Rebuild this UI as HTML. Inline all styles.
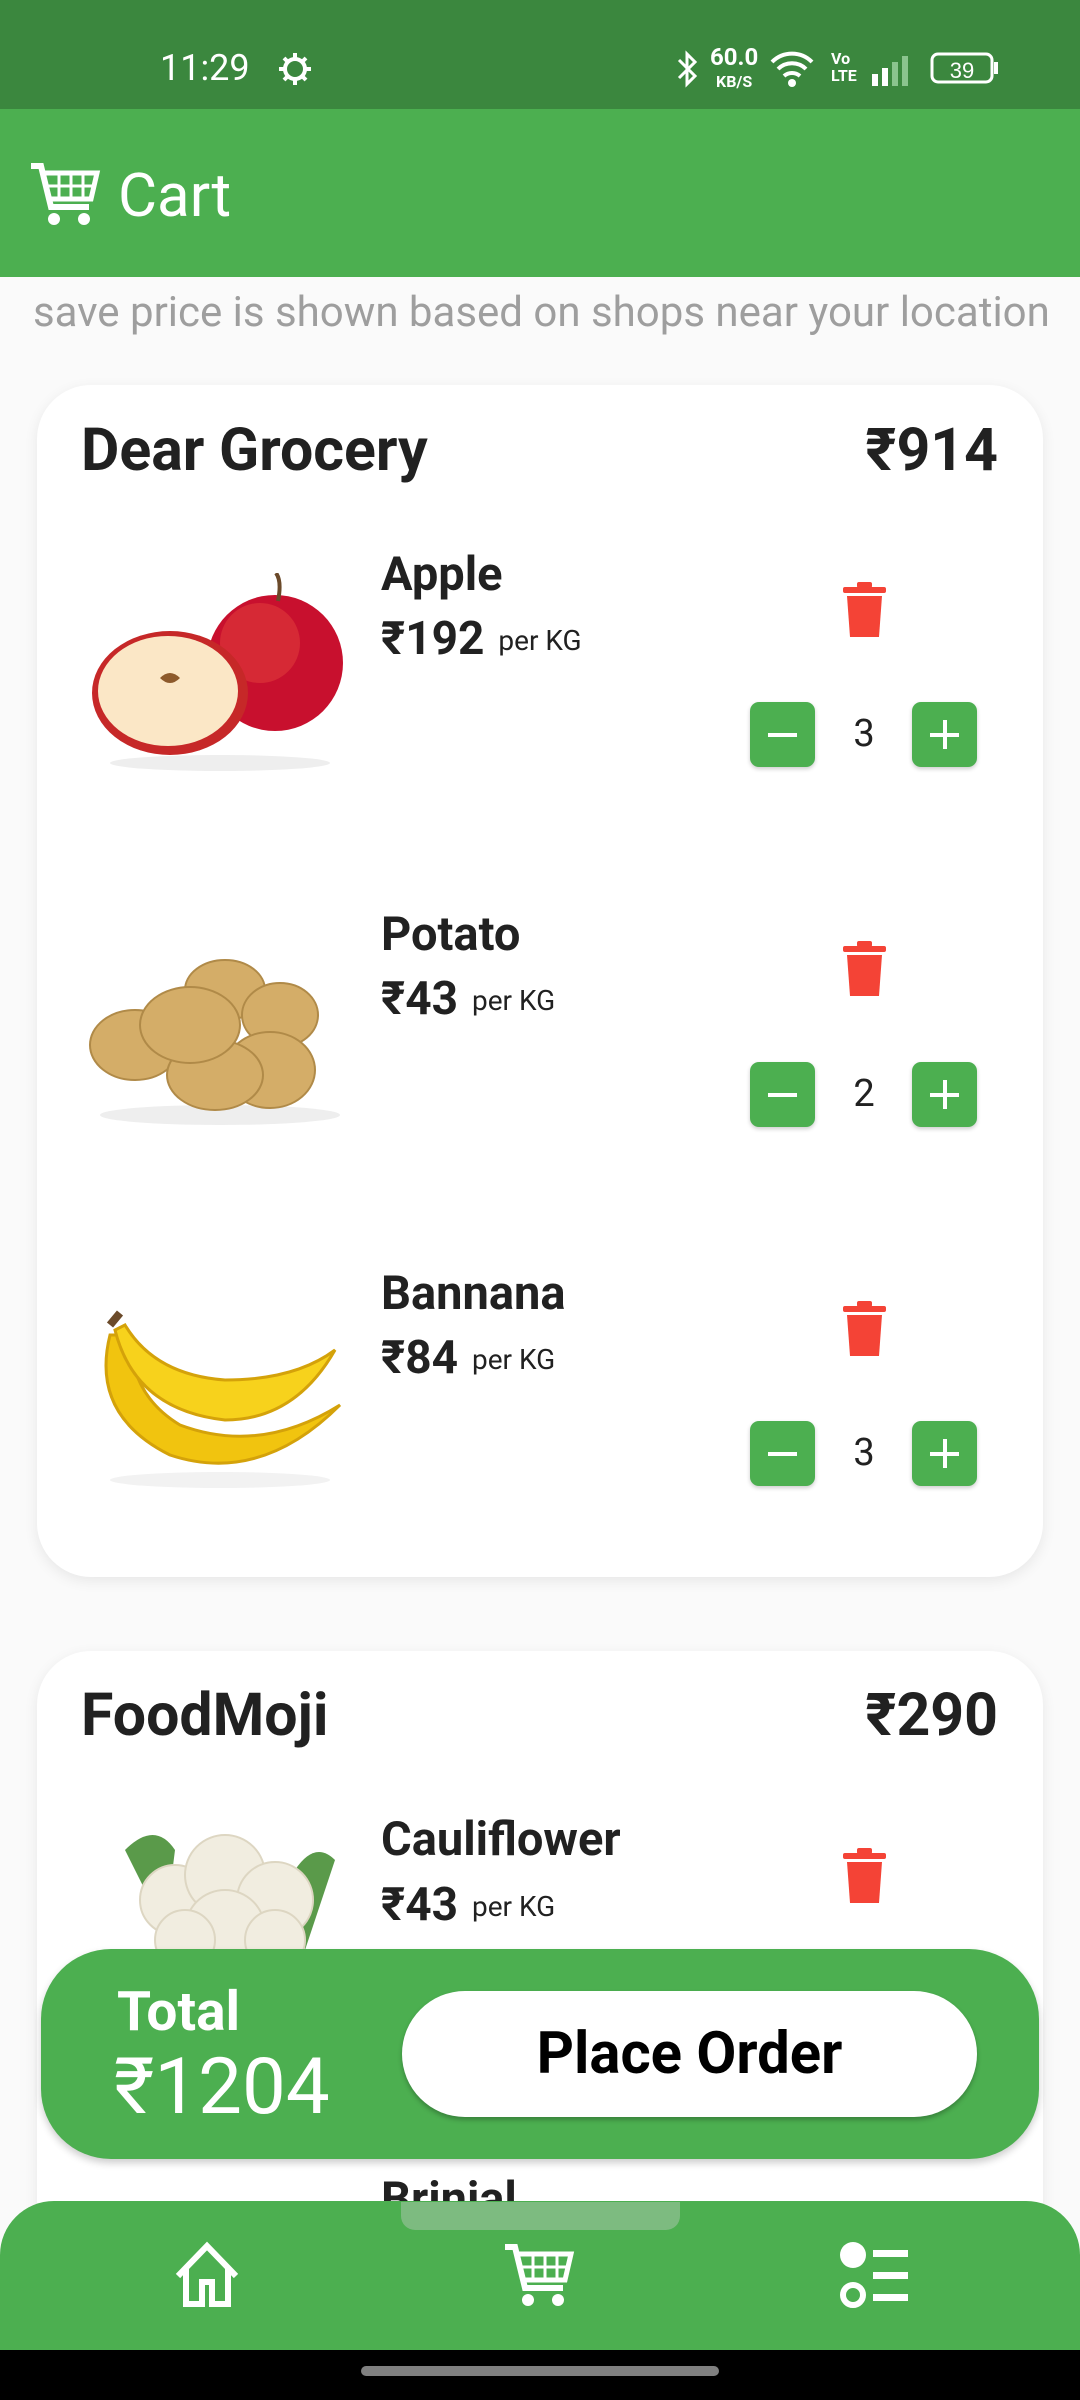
<!DOCTYPE html>
<html><head><meta charset="utf-8"><style>
*{margin:0;padding:0;box-sizing:border-box}
html,body{width:1080px;height:2400px;overflow:hidden}
body{background:#fafafa;font-family:"Roboto","Liberation Sans",sans-serif;position:relative;color:#212121}
.a{position:absolute}
.status{left:0;top:0;width:1080px;height:109px;background:#3b873e;color:#fff}
.appbar{left:0;top:109px;width:1080px;height:168px;background:#4caf50;color:#fff}
.card{background:#fff;border-radius:54px;box-shadow:0 4px 14px rgba(0,0,0,.08)}
.shop{font-weight:bold;font-size:59px;line-height:66px}
.name{font-weight:bold;font-size:47px;line-height:52px;left:381px}
.price{left:381px;font-weight:bold;font-size:46px;line-height:52px}
.price span{font-weight:normal;font-size:28px;margin-left:14px;vertical-align:4px}
.btn{width:65px;height:65px;background:#4caf50;border-radius:9px;box-shadow:0 2px 4px rgba(0,0,0,.2)}
.btn:before{content:"";position:absolute;left:18px;top:31px;width:29px;height:4px;background:#fff}
.plus:after{content:"";position:absolute;left:31px;top:18px;width:4px;height:29px;background:#fff}
.num{width:60px;text-align:center;font-size:38px;line-height:65px;margin-left:-30px}
</style></head><body>
<div class="a status">
 <div class="a" style="left:160px;top:48px;font-size:36px;line-height:40px">11:29</div>
 <svg class="a" style="left:278px;top:52px" width="34" height="34" viewBox="0 0 34 34"><circle cx="17" cy="17" r="10" fill="none" stroke="#fff" stroke-width="4"/><g stroke="#fff" stroke-width="4"><line x1="17" y1="1" x2="17" y2="7"/><line x1="17" y1="27" x2="17" y2="33"/><line x1="1" y1="17" x2="7" y2="17"/><line x1="27" y1="17" x2="33" y2="17"/><line x1="6" y1="6" x2="10" y2="10"/><line x1="24" y1="24" x2="28" y2="28"/><line x1="28" y1="6" x2="24" y2="10"/><line x1="6" y1="28" x2="10" y2="24"/></g></svg>
 <svg class="a" style="left:676px;top:50px" width="24" height="38" viewBox="0 0 24 38"><path d="M3 10 L19 26 L11 34 V4 L19 12 L3 28" fill="none" stroke="#fff" stroke-width="3"/></svg>
 <div class="a" style="left:710px;top:46px;font-size:24px;line-height:22px;font-weight:bold;text-align:center">60.0<br><span style="font-size:16px">KB/S</span></div>
 <svg class="a" style="left:770px;top:50px" width="46" height="38" viewBox="0 0 46 38"><path d="M2 12 A28 28 0 0 1 42 12 M8 19 A20 20 0 0 1 36 19 M14 26 A12 12 0 0 1 30 26" fill="none" stroke="#fff" stroke-width="4"/><circle cx="22" cy="33" r="4" fill="#fff"/></svg>
 <div class="a" style="left:831px;top:50px;font-size:16px;line-height:17px;font-weight:bold">Vo<br>LTE</div>
 <svg class="a" style="left:870px;top:54px" width="46" height="32"><rect x="2" y="20" width="6" height="12" fill="#fff"/><rect x="12" y="14" width="6" height="18" fill="#fff"/><rect x="22" y="8" width="6" height="24" fill="#8bc48e"/><rect x="32" y="2" width="6" height="30" fill="#8bc48e"/></svg>
 <svg class="a" style="left:930px;top:52px" width="70" height="34"><rect x="2" y="2" width="60" height="28" rx="6" fill="none" stroke="#fff" stroke-width="3"/><rect x="64" y="10" width="4" height="12" fill="#fff"/><text x="32" y="26" font-size="22" fill="#fff" text-anchor="middle" font-family="Liberation Sans">39</text></svg>
</div>
<div class="a appbar">
 <svg class="a" style="left:29px;top:52px" width="72" height="66" viewBox="0 0 72 66"><path d="M2 5 H12 L22 46 H60" fill="none" stroke="#fff" stroke-width="6"/><path d="M14 12 H68 L62 38 H20 Z" fill="none" stroke="#fff" stroke-width="5"/><path d="M30 14 V36 M42 14 V36 M54 14 V36 M18 25 H64" stroke="#fff" stroke-width="3"/><circle cx="25" cy="58" r="6" fill="#fff"/><circle cx="55" cy="58" r="6" fill="#fff"/></svg>
 <div class="a" style="left:118px;top:52px;font-size:60px;line-height:70px">Cart</div>
</div>
<div class="a" style="left:33px;top:289px;font-size:42px;line-height:48px;color:#9e9e9e;white-space:nowrap">save price is shown based on shops near your location</div>

<div class="a card" style="left:37px;top:385px;width:1006px;height:1192px"></div>
<div class="a shop" style="left:81px;top:418px">Dear Grocery</div>
<div class="a shop" style="left:760px;top:418px;width:238px;text-align:right">₹914</div>

<div class="a card" style="left:37px;top:1651px;width:1006px;height:749px;border-radius:54px 54px 0 0"></div>
<div class="a shop" style="left:81px;top:1683px">FoodMoji</div>
<div class="a shop" style="left:760px;top:1683px;width:238px;text-align:right">₹290</div>

<svg class="a" style="left:80px;top:573px" width="270" height="200" viewBox="0 0 270 200"><ellipse cx="140" cy="190" rx="110" ry="8" fill="#eee"/><circle cx="195" cy="90" r="68" fill="#c8102e"/><circle cx="180" cy="70" r="40" fill="#e03a3a" opacity=".6"/><path d="M198 28 q4 -20 -2 -28" stroke="#6b4a2a" stroke-width="4" fill="none"/><ellipse cx="90" cy="120" rx="78" ry="62" fill="#c62828"/><ellipse cx="88" cy="118" rx="70" ry="55" fill="#fbe7c6"/><path d="M80 105 q10 -10 20 0 q-10 10 -20 0" fill="#8d5a2b"/></svg>
<svg class="a" style="left:80px;top:935px" width="270" height="200" viewBox="0 0 270 200"><ellipse cx="140" cy="180" rx="120" ry="10" fill="#eee"/><g fill="#d4ad68" stroke="#b08a48" stroke-width="2"><ellipse cx="55" cy="110" rx="45" ry="35"/><ellipse cx="145" cy="55" rx="40" ry="30"/><ellipse cx="200" cy="80" rx="38" ry="32"/><ellipse cx="190" cy="135" rx="45" ry="38"/><ellipse cx="135" cy="140" rx="48" ry="35"/><ellipse cx="110" cy="90" rx="50" ry="38"/></g></svg>
<svg class="a" style="left:80px;top:1295px" width="270" height="200" viewBox="0 0 270 200"><ellipse cx="140" cy="185" rx="110" ry="8" fill="#f2f2f2"/><path d="M30 40 q-20 80 60 120 q90 30 170 -50 q-80 50 -160 20 q-50 -30 -50 -90z" fill="#f1c40f" stroke="#d4a20a" stroke-width="3"/><path d="M35 35 q20 80 110 90 q70 0 110 -70 q-40 30 -110 30 q-70 -5 -100 -55z" fill="#f7d21c" stroke="#d4a20a" stroke-width="3"/><path d="M30 30 l10 -12" stroke="#6b4a2a" stroke-width="8"/></svg>
<svg class="a" style="left:115px;top:1820px" width="230" height="130" viewBox="0 0 230 130"><path d="M10 30 q30 -30 50 0 l-10 80z" fill="#5a9a4a"/><path d="M220 40 q-20 -20 -40 10 l10 80z" fill="#5a9a4a"/><g fill="#f1ede0" stroke="#ddd6c2" stroke-width="2"><circle cx="60" cy="80" r="35"/><circle cx="110" cy="55" r="40"/><circle cx="160" cy="80" r="38"/><circle cx="110" cy="110" r="40"/><circle cx="70" cy="120" r="30"/><circle cx="160" cy="120" r="30"/></g></svg>

<div class="a name" style="top:549px">Apple</div>
<div class="a price" style="top:613px">₹192<span>per KG</span></div>
<div class="a name" style="top:909px">Potato</div>
<div class="a price" style="top:973px">₹43<span>per KG</span></div>
<div class="a name" style="top:1268px">Bannana</div>
<div class="a price" style="top:1332px">₹84<span>per KG</span></div>
<div class="a name" style="top:1814px">Cauliflower</div>
<div class="a price" style="top:1879px">₹43<span>per KG</span></div>
<div class="a name" style="top:2174px">Brinjal</div>

<svg width="0" height="0" style="position:absolute"><defs><g id="tr"><rect x="0" y="5" width="43" height="6" rx="2" fill="#f44336"/><rect x="14" y="0" width="15" height="6" rx="2" fill="#f44336"/><path d="M4 14 H39 L36 55 H7 Z" fill="#f44336"/></g></defs></svg>
<svg class="a" style="left:843px;top:582px" width="43" height="56"><use href="#tr"/></svg>
<svg class="a" style="left:843px;top:941px" width="43" height="56"><use href="#tr"/></svg>
<svg class="a" style="left:843px;top:1301px" width="43" height="56"><use href="#tr"/></svg>
<svg class="a" style="left:843px;top:1848px" width="43" height="56"><use href="#tr"/></svg>

<div class="a btn" style="left:750px;top:702px"></div><div class="a num" style="left:864px;top:702px">3</div><div class="a btn plus" style="left:912px;top:702px"></div>
<div class="a btn" style="left:750px;top:1062px"></div><div class="a num" style="left:864px;top:1062px">2</div><div class="a btn plus" style="left:912px;top:1062px"></div>
<div class="a btn" style="left:750px;top:1421px"></div><div class="a num" style="left:864px;top:1421px">3</div><div class="a btn plus" style="left:912px;top:1421px"></div>

<div class="a" style="left:41px;top:1949px;width:998px;height:210px;background:#4caf50;border-radius:70px;box-shadow:0 4px 8px rgba(0,0,0,.2)"></div>
<div class="a" style="left:117px;top:1981px;color:#fff;font-weight:bold;font-size:55px;line-height:62px">Total</div>
<div class="a" style="left:114px;top:2045px;color:#fff;font-size:78px;line-height:86px">₹1204</div>
<div class="a" style="left:402px;top:1991px;width:575px;height:126px;background:#fff;border-radius:63px;box-shadow:0 3px 5px rgba(0,0,0,.25);text-align:center;font-weight:bold;font-size:58px;line-height:126px;color:#000">Place Order</div>

<div class="a" style="left:0;top:2201px;width:1080px;height:149px;background:#4caf50;border-radius:54px 54px 0 0"></div>
<div class="a" style="left:401px;top:2202px;width:279px;height:28px;background:#7dbb80;border-radius:0 0 14px 14px"></div>
<svg class="a" style="left:172px;top:2240px" width="70" height="70" viewBox="0 0 70 70"><path d="M6 36 L35 6 L64 36 M14 28 V64 H30 V42 H40 V64 H56 V28" fill="none" stroke="#fff" stroke-width="6" stroke-linejoin="miter"/></svg>
<svg class="a" style="left:503px;top:2240px" width="72" height="70" viewBox="0 0 72 66"><path d="M2 5 H12 L22 46 H60" fill="none" stroke="#fff" stroke-width="6"/><path d="M14 12 H68 L62 38 H20 Z" fill="none" stroke="#fff" stroke-width="5"/><path d="M30 14 V36 M42 14 V36 M54 14 V36 M18 25 H64" stroke="#fff" stroke-width="3"/><circle cx="25" cy="58" r="6" fill="#fff"/><circle cx="55" cy="58" r="6" fill="#fff"/></svg>
<svg class="a" style="left:838px;top:2240px" width="72" height="70" viewBox="0 0 72 70"><circle cx="15" cy="15" r="13" fill="#fff"/><circle cx="15" cy="55" r="10" fill="none" stroke="#fff" stroke-width="6"/><rect x="35" y="10" width="35" height="7" fill="#fff"/><rect x="35" y="32" width="35" height="7" fill="#fff"/><rect x="35" y="54" width="35" height="7" fill="#fff"/></svg>

<div class="a" style="left:0;top:2350px;width:1080px;height:50px;background:#000"></div>
<div class="a" style="left:361px;top:2366px;width:358px;height:10px;background:#808080;border-radius:5px"></div>
</body></html>
